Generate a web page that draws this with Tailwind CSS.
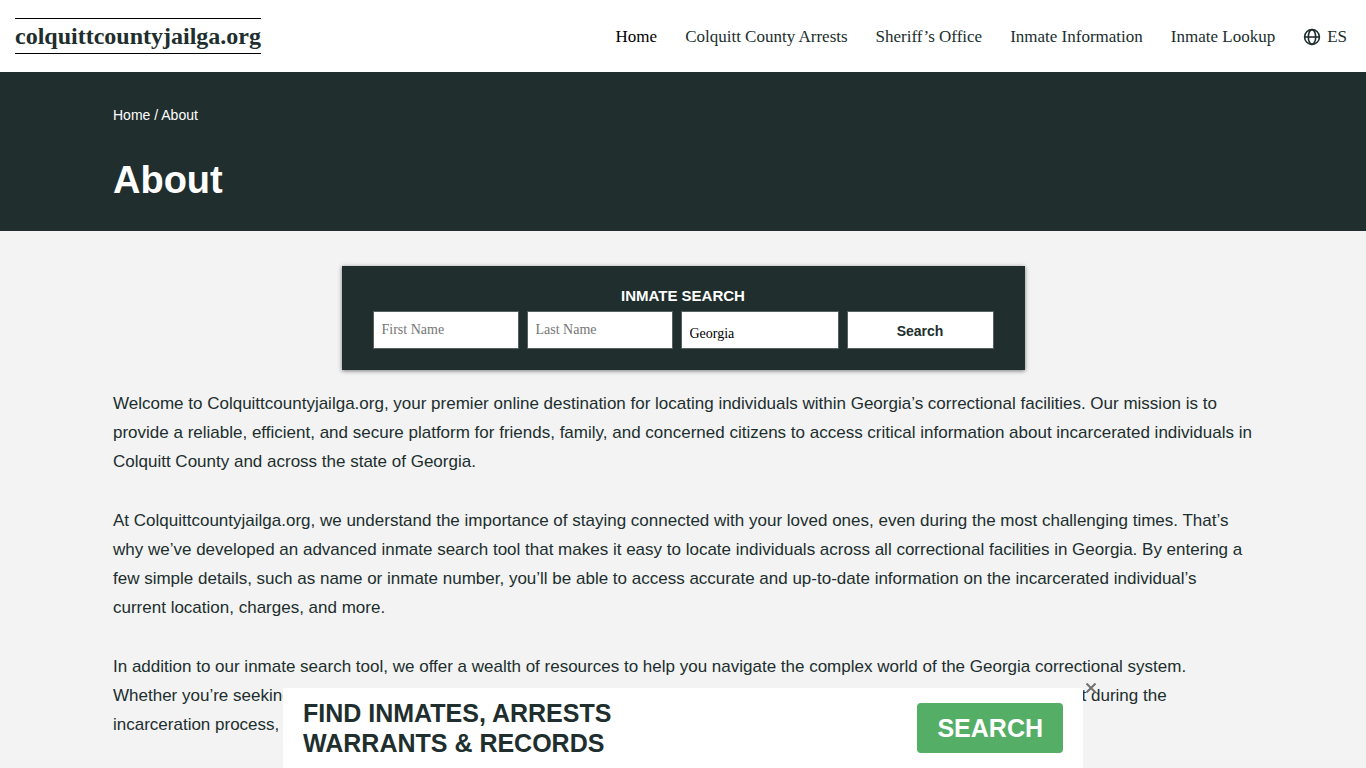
<!DOCTYPE html>
<html lang="en">
  <head>
    <meta charset="UTF-8" />
    <meta name="viewport" content="width=device-width, initial-scale=1.0" />
    <title>About - colquittcountyjailga.org</title>
    <script src="https://cdn.jsdelivr.net/npm/@tailwindcss/browser@4"></script>
  </head>
  <body class="bg-[#f3f3f3] text-[#202e2e] font-['Liberation_Sans',Arial,sans-serif]">
    <!-- Header -->
    <header class="flex h-18 items-center justify-between bg-white pl-[15px] pr-[19px] font-['Liberation_Serif',serif]">
      <a href="#" class="border-y border-black text-[24px] leading-[34px] font-bold">colquittcountyjailga.org</a>
      <nav class="flex items-center gap-7 pt-0.5 text-[17px]">
        <a href="#" class="text-black">Home</a>
        <a href="#">Colquitt County Arrests</a>
        <a href="#">Sheriff’s Office</a>
        <a href="#">Inmate Information</a>
        <a href="#">Inmate Lookup</a>
        <a href="#" class="flex items-center gap-1.5">
          <svg class="size-[18px]" viewBox="0 0 18 18" fill="none" stroke="currentColor" stroke-width="1.6">
            <circle cx="9" cy="9" r="7.4" />
            <ellipse cx="9" cy="9" rx="3.7" ry="7.4" />
            <path d="M1.6 9h14.8" />
          </svg>
          ES
        </a>
      </nav>
    </header>

    <!-- Page title -->
    <section class="bg-[#202e2e] text-white">
      <div class="mx-auto max-w-[1140px] pt-8 pb-[26px]">
        <p class="text-[14px] leading-[22px]"><a href="#">Home</a> / About</p>
        <h1 class="mt-[30px] text-[38px] leading-[49px] font-bold">About</h1>
      </div>
    </section>

    <main class="pt-[35px]">
      <!-- Search form -->
      <form class="mx-auto w-1/2 bg-[#202e2e] px-[31px] pt-5 pb-[21px] shadow-[0_1px_4px_rgba(0,0,0,0.5)]">
        <h2 class="text-center text-[15px] leading-5 font-bold text-white">INMATE SEARCH</h2>
        <div class="mt-[5px] grid grid-cols-[146fr_146fr_158fr_147fr] gap-2">
          <input type="text" aria-label="First Name" placeholder="First Name" class="h-[38px] w-full min-w-0 border border-[#55605f] bg-white px-2 font-['Liberation_Serif',serif] text-[14px] placeholder:text-[#757575]" />
          <input type="text" aria-label="Last Name" placeholder="Last Name" class="h-[38px] w-full min-w-0 border border-[#55605f] bg-white px-2 font-['Liberation_Serif',serif] text-[14px] placeholder:text-[#757575]" />
          <select aria-label="State" class="h-[38px] w-full min-w-0 appearance-none border border-[#55605f] bg-white px-2 pt-1.5 font-['Liberation_Serif',serif] text-[14px] text-black">
            <option>Georgia</option>
          </select>
          <button type="button" class="h-[38px] min-w-0 border border-[#55605f] bg-white pt-0.5 text-[14px] font-bold">Search</button>
        </div>
      </form>

      <!-- Content -->
      <article class="mx-auto mt-[19px] flex max-w-[1140px] flex-col gap-[30px] pb-8 text-[17px] leading-[29px]">
        <p>Welcome to Colquittcountyjailga.org, your premier online destination for locating individuals within Georgia’s correctional facilities. Our mission is to provide a reliable, efficient, and secure platform for friends, family, and concerned citizens to access critical information about incarcerated individuals in Colquitt County and across the state of Georgia.</p>
        <p>At Colquittcountyjailga.org, we understand the importance of staying connected with your loved ones, even during the most challenging times. That’s why we’ve developed an advanced inmate search tool that makes it easy to locate individuals across all correctional facilities in Georgia. By entering a few simple details, such as name or inmate number, you’ll be able to access accurate and up-to-date information on the incarcerated individual’s current location, charges, and more.</p>
        <p>In addition to our inmate search tool, we offer a wealth of resources to help you navigate the complex world of the Georgia correctional system. Whether you’re seeking legal advice, information on visitation policies, or simply looking for more guidance and emotional support during the incarceration process, we are here to help.</p>
      </article>
    </main>

    <!-- Bottom banner -->
    <aside class="fixed bottom-0 left-1/2 flex h-20 w-full max-w-[800px] -translate-x-1/2 items-center justify-between bg-white px-5">
      <p class="text-[25px] leading-[30px] font-bold">FIND INMATES, ARRESTS<br />WARRANTS &amp; RECORDS</p>
      <button type="button" class="h-[50px] rounded bg-[#54ae66] px-5 pt-0.5 text-[25px] font-bold text-white">SEARCH</button>
      <button type="button" aria-label="Close" class="absolute -top-[5px] -right-[13px]">
        <svg class="size-2.5" viewBox="0 0 10 10" stroke="#707070" stroke-width="2">
          <path d="M.5 .5l9 9M9.5 .5l-9 9" />
        </svg>
      </button>
    </aside>
  </body>
</html>
